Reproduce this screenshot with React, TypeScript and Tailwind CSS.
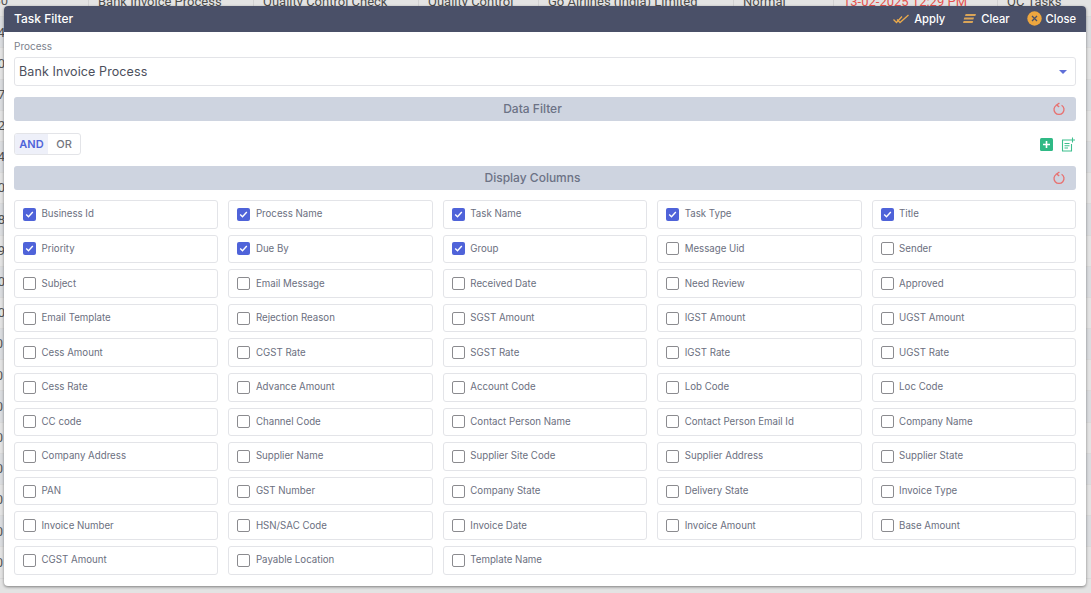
const rowIds = ['1130', '2204', '3130', '4107', '5102', '6104', '7100', '8108', '9109', '1010', '1100', '1200', '1300', '1400', '1500', '1600', '1700', '1800', '1900'];

const columns = [
  ['Business Id', true], ['Process Name', true], ['Task Name', true], ['Task Type', true], ['Title', true],
  ['Priority', true], ['Due By', true], ['Group', true], ['Message Uid', false], ['Sender', false],
  ['Subject', false], ['Email Message', false], ['Received Date', false], ['Need Review', false], ['Approved', false],
  ['Email Template', false], ['Rejection Reason', false], ['SGST Amount', false], ['IGST Amount', false], ['UGST Amount', false],
  ['Cess Amount', false], ['CGST Rate', false], ['SGST Rate', false], ['IGST Rate', false], ['UGST Rate', false],
  ['Cess Rate', false], ['Advance Amount', false], ['Account Code', false], ['Lob Code', false], ['Loc Code', false],
  ['CC code', false], ['Channel Code', false], ['Contact Person Name', false], ['Contact Person Email Id', false], ['Company Name', false],
  ['Company Address', false], ['Supplier Name', false], ['Supplier Site Code', false], ['Supplier Address', false], ['Supplier State', false],
  ['PAN', false], ['GST Number', false], ['Company State', false], ['Delivery State', false], ['Invoice Type', false],
  ['Invoice Number', false], ['HSN/SAC Code', false], ['Invoice Date', false], ['Invoice Amount', false], ['Base Amount', false],
  ['CGST Amount', false], ['Payable Location', false],
] as [string, boolean][];

function ResetIcon() {
  return (
    <svg width="14" height="14" viewBox="0 0 14 14" fill="none" stroke="#e8706f" strokeWidth="1.3">
      <path d="M4.4 3.2a5 5 0 1 0 5.2 0" />
      <path d="M7.4 1 4.6 3.1l2.6 1.8" />
    </svg>
  );
}

function SectionBar({ title }: { title: string }) {
  return (
    <div className="relative flex h-6 items-center justify-center rounded-[3px] bg-[#ced4e0] pr-[25px] text-[12px] font-medium text-[#6c7285]">
      {title}
      <span className="absolute right-[10px] top-[5px]">
        <ResetIcon />
      </span>
    </div>
  );
}

function ColumnOption({ label, checked, wide }: { label: string; checked: boolean; wide?: boolean }) {
  return (
    <label className={`flex h-[28.6px] items-center rounded-[3px] border border-[#e3e4e8] bg-white pl-[8px] ${wide ? 'col-span-3' : ''}`}>
      {checked ? (
        <span className="flex h-[13px] w-[13px] items-center justify-center rounded-[2px] bg-[#4f63d9]">
          <svg width="9" height="9" viewBox="0 0 9 9" fill="none" stroke="#fff" strokeWidth="1.4">
            <path d="M1.2 4.6 3.5 6.8 7.8 2" />
          </svg>
        </span>
      ) : (
        <span className="h-[13px] w-[13px] rounded-[2px] border-[1.5px] border-[#8b8b8f] bg-white" />
      )}
      <span className="ml-[5.5px] pt-[0.6px] text-[9.7px] text-[#6b6f80]">{label}</span>
    </label>
  );
}

export default function App() {
  return (
    <div className="relative h-[593px] w-[1091px] overflow-hidden bg-[#e3e3e3] font-['Inter',sans-serif]">
      {/* table behind the dialog */}
      <div className="-mt-[14px] font-['Roboto',sans-serif] text-[13px] text-[#4b4b4b]">
        {rowIds.map((id, i) => (
          <div key={id} className={`flex h-[31.2px] items-center border-b border-[#d9d9d9] ${i % 2 ? 'bg-[#dadcdf]' : 'bg-[#e3e3e3]'}`}>
            <div className={`flex w-[88px] justify-end whitespace-nowrap text-[#555] ${i === 0 ? 'pr-[80px]' : i < 11 ? 'pr-[83px]' : 'pr-[85px]'}`}>{id}</div>
            {i === 0 && (
              <>
                <div className="h-full w-[165px] border-l border-[#d2d2d2] pl-[9px] leading-[31px]">Bank Invoice Process</div>
                <div className="h-full w-[165px] border-l border-[#d2d2d2] pl-[9px] leading-[31px]">Quality Control Check</div>
                <div className="h-full w-[120px] border-l border-[#d2d2d2] pl-[9px] leading-[31px]">Quality Control</div>
                <div className="h-full w-[195px] border-l border-[#d2d2d2] pl-[9px] leading-[31px]">Go Airlines (India) Limited</div>
                <div className="h-full w-[100px] border-l border-[#d2d2d2] pl-[9px] leading-[31px]">Normal</div>
                <div className="h-full w-[164px] border-l border-[#d2d2d2] pl-[9px] leading-[31px] text-[#e5534f]">13-02-2025 12:29 PM</div>
                <div className="h-full flex-1 border-l border-[#d2d2d2] pl-[9px] leading-[31px]">QC Tasks</div>
              </>
            )}
          </div>
        ))}
      </div>

      {/* dialog */}
      <div className="absolute left-[4px] top-[6px] h-[580px] w-[1082px] overflow-hidden rounded-[4px] bg-white shadow-[0_1px_3px_rgba(0,0,0,0.45)]">
        <div className="flex h-[26px] items-center justify-between bg-[#4a5068] pl-[10px] pr-[10px] text-[11.2px] font-medium text-white">
          <span className="text-[12px]">Task Filter</span>
          <div className="flex items-center">
            <svg width="16" height="10" viewBox="0 0 16 10" fill="none" stroke="#e9a94b" strokeWidth="1.3">
              <path d="M0.5 5.5 3.5 8.5 9 2.5" />
              <path d="M4 5.5 7 8.5 15.5 1" />
            </svg>
            <span className="ml-[5px]">Apply</span>
            <svg className="ml-[18px]" width="13" height="9" viewBox="0 0 13 9" fill="#d9a458">
              <path d="M2.6 0H13l-.7 2H2z" />
              <path d="M1.3 3.5H11l-.6 2H.7z" />
              <path d="M.6 7h9.6l-.6 2H0z" />
            </svg>
            <span className="ml-[5px]">Clear</span>
            <svg className="ml-[17px]" width="15" height="15" viewBox="0 0 15 15" fill="none">
              <circle cx="7.5" cy="7.5" r="7.2" fill="#eda63f" />
              <path d="M5 5 10 10M10 5 5 10" stroke="#4a5068" strokeWidth="1.3" />
            </svg>
            <span className="ml-[4px]">Close</span>
          </div>
        </div>

        <div className="px-[10px]">
          <div className="mt-[9px] h-[11px] text-[10px] leading-[11px] text-[#7b7f8c]">Process</div>
          <div className="relative mt-[5px] flex h-[29px] items-center rounded-[3px] border border-[#e3e4e8] pl-[4px] pt-px text-[12.5px] tracking-[0.1px] text-[#4c4f5c]">
            Bank Invoice Process
            <span className="absolute right-[8px] top-[12px] h-0 w-0 border-x-[4px] border-t-[4px] border-x-transparent border-t-[#5f6fd8]" />
          </div>

          <div className="mt-[11px]">
            <SectionBar title="Data Filter" />
          </div>

          <div className="mt-[12px] flex h-[22px] items-center justify-between">
            <div className="flex h-[22px] w-[67px] overflow-hidden rounded-[3px] border border-[#e3e4e8] text-[11px] font-semibold">
              <span className="flex w-[33px] items-center justify-center bg-[#eef0f9] text-[#4f63d9]">AND</span>
              <span className="flex flex-1 items-center justify-center font-medium text-[#74767f]">OR</span>
            </div>
            <div className="flex items-center">
              <svg width="13" height="13" viewBox="0 0 13 13">
                <rect width="13" height="13" rx="1.5" fill="#2fb985" />
                <path d="M6.5 3v7M3 6.5h7" stroke="#fff" strokeWidth="1.6" />
              </svg>
              <svg className="ml-[8px] mr-px" width="14" height="15" viewBox="0 0 14 15" fill="none" stroke="#3dbf8e" strokeWidth="1.1">
                <path d="M9 3H1.5v11h9V7" />
                <path d="M3.5 6.5h5M3.5 8.8h5M3.5 11h3.5" />
                <path d="M11.5 0.5v5M9 3h5" />
              </svg>
            </div>
          </div>

          <div className="mt-[11px]">
            <SectionBar title="Display Columns" />
          </div>

          <div className="mt-[10px] grid grid-cols-5 gap-x-[10px] gap-y-[6px]">
            {columns.map(([label, checked]) => (
              <ColumnOption key={label} label={label} checked={checked} />
            ))}
            <ColumnOption label="Template Name" checked={false} wide />
          </div>
        </div>
      </div>
    </div>
  );
}
